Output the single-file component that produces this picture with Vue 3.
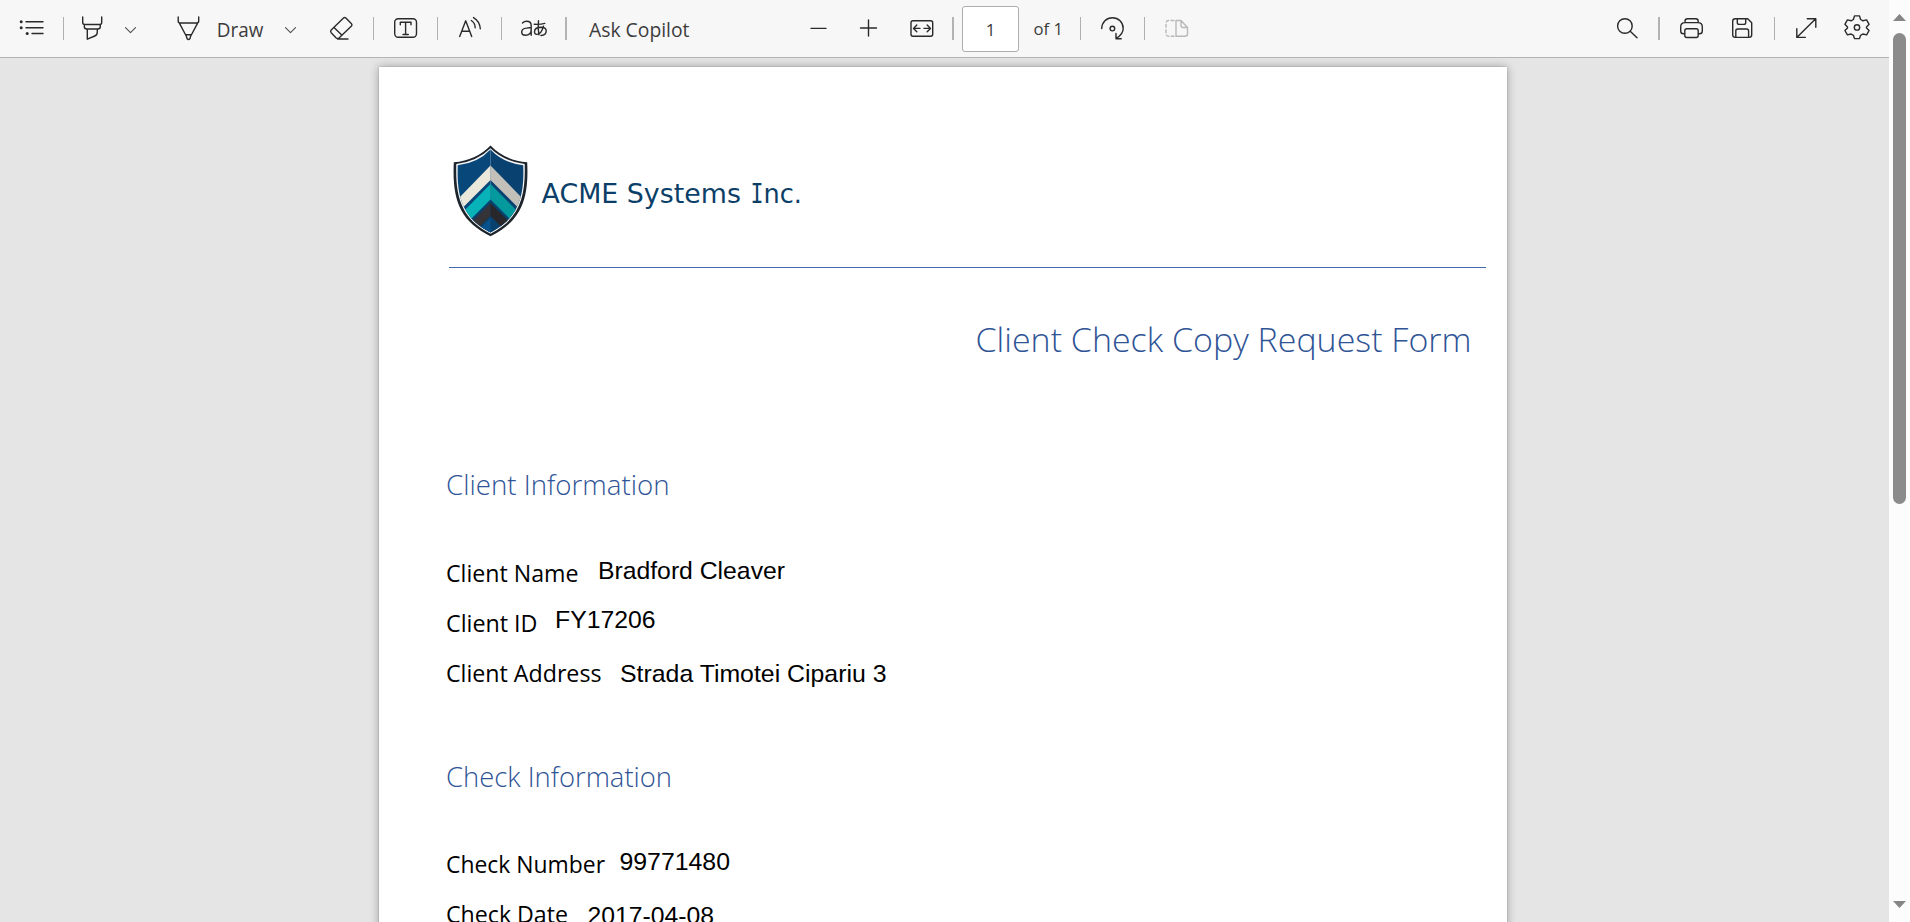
<script setup>
const clientFields = [
  { top: 557, label: 'Client Name', labelY: 582, labelLen: 132.5, value: 'Bradford Cleaver', x: 598, y: 579, len: 187 },
  { top: 607, label: 'Client ID', labelY: 632, labelLen: 91.5, value: 'FY17206', x: 555, y: 628, len: 100.5 },
  { top: 657, label: 'Client Address', labelY: 682, labelLen: 155.5, value: 'Strada Timotei Cipariu 3', x: 620, y: 682, len: 266.5 },
]
const checkFields = [
  { top: 848, label: 'Check Number', labelY: 873, labelLen: 159, value: '99771480', x: 619.5, y: 870, len: 110.5 },
  { top: 898, label: 'Check Date', labelY: 923, labelLen: 122, value: '2017-04-08', x: 587.5, y: 924, len: 126.5 },
]
</script>

<template>
  <div class="viewer">
    <div class="main">
      <header class="toolbar">
        <svg class="contents" width="24" height="57" viewBox="19 0 24 57"><path d="M26 21.7h17M26 27.7h17M32 33.5h11" /><g class="solid"><circle cx="21.2" cy="21.7" r="1.5" /><circle cx="21.2" cy="27.7" r="1.5" /><circle cx="27.2" cy="33.5" r="1.5" /></g></svg>
        <i class="sep s1"></i>
        <svg class="highlight" width="24" height="57" viewBox="80 0 24 57"><path d="M82.7 17v5.5q0 2 2 2h15q2 0 2-2V17M84.3 24.5v2q0 2.5 2.5 2.5h11q2.500 0 2.500-2.500v-2M87.300 29v10.200l7.500-3.200q2.500-1 2.500-4v-3" /></svg>
        <svg class="chev c1" width="13" height="57" viewBox="124 0 13 57"><path d="M125.500 27.700l5 5 5-5" /></svg>
        <svg class="pen" width="24" height="57" viewBox="176 0 24 57"><path d="M178.200 17v4q0 2 2 2h16.500q2 0 2-2v-4M179.500 23.300l7 13.200q.3 3 2 3t2-3l7-13.200M185.800 34.800h5.200" /></svg>
        <svg class="draw" width="46" height="57" viewBox="217 0 46 57"><text class="ui" x="216.800" y="37" textLength="46.500" lengthAdjust="spacingAndGlyphs">Draw</text></svg>
        <svg class="chev c2" width="13" height="57" viewBox="284 0 13 57"><path d="M285.500 27.700l5 5 5-5" /></svg>
        <svg class="eraser" width="24" height="57" viewBox="329 0 24 57"><path d="M331.200 30l12.300-12q1.200-1 2.400 0l5.600 5.700q1 1.200 0 2.400L339 38q-1.400 1.200-2.800 0l-5-5.200q-1.200-1.400 0-2.800zM334 27.400l8 7.800M337.500 39h10.500" /></svg>
        <i class="sep s2"></i>
        <svg class="textbox" width="24" height="57" viewBox="394 0 24 57"><rect x="394.700" y="18.700" width="21.800" height="18.600" rx="3.500" /><path d="M400.300 24.800v-2.600h10.700v2.600M405.600 22.200v12.300M403 34.500h5.300" /></svg>
        <i class="sep s3"></i>
        <svg class="read" width="24" height="57" viewBox="458 0 24 57"><path d="M459.700 36.500l6-15.700 6 15.700M461.800 31.300h7.900M471.300 20.500q3.800 2.200 3.900 7.300M473.500 17.600q6.300 3.700 6.800 11.200" /></svg>
        <i class="sep s4"></i>
        <svg class="translate" width="28" height="57" viewBox="520 0 28 57"><path d="M522.500 23q1.500-1.700 4.300-1.700 4.400 0 4.400 4.200v9.700M531.200 27.500l-4.700.6q-4.800.5-4.800 3.900 0 3.200 3.600 3.200 5.900 0 5.900-5.700M534.300 24.200q5.500.5 10.500-.8M538.500 20.800q-1 8 .5 14M543.500 26.200q-2 7.800-6.500 8.200-2.500.1-2.500-2.600 0-4.600 6.700-4.600 5 .2 5 3.700 0 4-5.200 4.600" /></svg>
        <i class="sep thick s5"></i>
        <svg class="copilot" width="102" height="57" viewBox="588 0 102 57"><text class="ui" x="589" y="37" textLength="100.500" lengthAdjust="spacingAndGlyphs">Ask Copilot</text></svg>
        <svg class="minus" width="24" height="57" viewBox="807 0 24 57"><path d="M811 28.400h15" /></svg>
        <svg class="plus" width="24" height="57" viewBox="856 0 24 57"><path d="M860.500 28h16M868.500 20v16" /></svg>
        <svg class="fit" width="26" height="57" viewBox="910 0 26 57"><rect x="911" y="20.700" width="21.700" height="15.600" rx="2" /><path d="M920 28.400h-6.500M916.800 25.100l-3.300 3.300 3.300 3.300M924 28.400h6.500M927.200 25.100l3.300 3.300-3.300 3.300" /></svg>
        <i class="sep thick s6"></i>
        <div class="page-number">1</div>
        <svg class="total" width="31" height="57" viewBox="1033 0 31 57"><text class="ui small" x="1033.500" y="35.200" textLength="29.500" lengthAdjust="spacingAndGlyphs">of 1</text></svg>
        <i class="sep s7"></i>
        <svg class="rotate" width="26" height="57" viewBox="1100 0 26 57"><path d="M1101.700 28.500c.2-6.500 4.800-10.800 10.700-10.800 6 0 10.800 4.800 10.800 10.600 0 4.200-2.600 7.500-6.800 9.900M1116 33.500v5.200h5.200" /><circle cx="1112.400" cy="28.600" r="2.300" /></svg>
        <i class="sep s8"></i>
        <svg class="pages" width="26" height="57" viewBox="1164 0 26 57"><path d="M1176 20.500v15.800h9q2.500 0 2.500-2.500v-6.300l-6.500-7zM1181 20.500v5q0 2 2 2h4.500" /><path stroke-dasharray="3 2.300" d="M1174 20.500h-5q-3 0-3 3v9.800q0 3 3 3h5" /></svg>
        <svg class="search" width="24" height="57" viewBox="1615 0 24 57"><circle cx="1624.900" cy="26" r="7.300" /><path d="M1630.200 31.300l6.800 6.500" /></svg>
        <i class="sep thick s9"></i>
        <svg class="print" width="24" height="57" viewBox="1680 0 24 57"><path d="M1684.500 33.700h-1q-2.800 0-2.800-2.800v-4q0-4.300 4.300-4.300h13q4.300 0 4.300 4.300v4q0 2.800-2.800 2.800h-1M1685 22.300v-1q0-2.600 2.600-2.600h8q2.600 0 2.600 2.600v1" /><rect x="1684.800" y="28.700" width="13.400" height="8.800" rx="2" /></svg>
        <svg class="save" width="24" height="57" viewBox="1731 0 24 57"><path d="M1735.200 18.700h12.500l4 4v12.100q0 2.600-2.600 2.600h-13.800q-2.600 0-2.600-2.600V21.200q0-2.500 2.500-2.500zM1737.300 18.700v3.800q0 1.900 1.900 1.900h4.600q1.900 0 1.900-1.900v-3.800M1735.800 37.300V31q0-2 2-2h8.800q2 0 2 2v6.300" /></svg>
        <i class="sep s10"></i>
        <svg class="expand" width="24" height="57" viewBox="1794 0 24 57"><path d="M1797 37.300l18.700-18.500M1807.300 18.700h8.500v8.500M1796.800 28.800v8.600h8.500" /></svg>
        <svg class="gear" width="25" height="57" viewBox="1845 0 25 57"><path d="M1854.500 15.900h5l1.100 3.600 2.300 1.300 3.700-.9 2.500 4.400-2.600 2.600v1l2.600 2.600-2.500 4.400-3.700-.9-2.300 1.300-1.100 3.300h-5l-1.100-3.300-2.300-1.300-3.700.9-2.500-4.400 2.600-2.600v-1l-2.600-2.600 2.500-4.400 3.700.9 2.300-1.300z" /><circle cx="1857" cy="27.400" r="2.700" /></svg>
      </header>

      <main class="canvas">
        <article class="sheet">
          <svg class="brand" width="400" height="100" viewBox="446 140 400 100">
            <defs>
              <clipPath id="shield-clip"><path d="M490.500 149.500Q478 163 457.800 165.300C456.500 196 462 218 490.500 232.500C519 218 524.500 196 523.200 165.300Q503 163 490.500 149.500Z" /></clipPath>
            </defs>
            <path class="shield-edge" d="M490.500 145.500Q476 160.500 453.800 162.300C452 200 460 221 490.500 236.300C521 221 529 200 527.200 162.300Q505 160.500 490.500 145.500Z" />
            <path class="shield-line" d="M490.500 148.300Q477 161.500 456.300 164C455.200 197 461.500 219 490.500 233.700C519.500 219 525.800 197 524.700 164Q504 161.500 490.500 148.300Z" />
            <g clip-path="url(#shield-clip)">
              <path fill="#07477a" d="M450 140h40.500v100H450z" />
              <path fill="#094270" d="M490.500 140H531v100h-40.500z" />
              <path fill="#e9e8db" d="M490.500 165.500L454 203v13.500l36.500-36.500z" />
              <path fill="#c2c0b9" d="M490.500 165.500L527 203v13.500L490.500 180z" />
              <path fill="#08b3b7" d="M490.500 184L458 217v17l32.500-33.500z" />
              <path fill="#049a9d" d="M490.500 184L523 217v17l-32.500-33.500z" />
              <path fill="#08416e" d="M490.500 199.500L462 228v15h57v-15z" />
              <path fill="#343337" d="M490.500 203L466 227.500v13l24.500-24.500z" />
              <path fill="#28272c" d="M490.500 203L515 227.500v13L490.500 216z" />
              <path fill="#07528b" d="M490.500 218L470 238h20.500z" />
            </g>
            <text class="company" y="203"><tspan x="541.500" textLength="208" lengthAdjust="spacingAndGlyphs">ACME Systems </tspan><tspan class="serif-i" x="750.500" textLength="13" lengthAdjust="spacingAndGlyphs">I</tspan><tspan x="763.500" textLength="38.500" lengthAdjust="spacingAndGlyphs">nc.</tspan></text>
          </svg>
          <div class="rule"></div>
          <svg class="title" width="520" height="60" viewBox="960 320 520 60"><text class="light big" x="975.500" y="351.500" textLength="496" lengthAdjust="spacingAndGlyphs">Client Check Copy Request Form</text></svg>
          <svg class="section first" width="300" height="45" viewBox="446 465 300 45"><text class="light" x="446" y="495" textLength="223.500" lengthAdjust="spacingAndGlyphs">Client Information</text></svg>
          <svg v-for="f in clientFields" :key="f.label" class="field" width="500" height="50" :viewBox="`446 ${f.top} 500 50`">
            <text class="label" x="446" :y="f.labelY" :textLength="f.labelLen" lengthAdjust="spacingAndGlyphs">{{ f.label }}</text>
            <text class="value" :x="f.x" :y="f.y" :textLength="f.len" lengthAdjust="spacingAndGlyphs">{{ f.value }}</text>
          </svg>
          <svg class="section second" width="300" height="45" viewBox="446 757 300 45"><text class="light" x="446" y="787" textLength="226" lengthAdjust="spacingAndGlyphs">Check Information</text></svg>
          <svg v-for="f in checkFields" :key="f.label" class="field" width="500" height="50" :viewBox="`446 ${f.top} 500 50`">
            <text class="label" x="446" :y="f.labelY" :textLength="f.labelLen" lengthAdjust="spacingAndGlyphs">{{ f.label }}</text>
            <text class="value" :x="f.x" :y="f.y" :textLength="f.len" lengthAdjust="spacingAndGlyphs">{{ f.value }}</text>
          </svg>
        </article>
      </main>
    </div>
    <aside class="scrollbar">
      <i class="arrow up"></i>
      <i class="thumb"></i>
      <i class="arrow down"></i>
    </aside>
  </div>
</template>

<style>
html, body { margin: 0; overflow: hidden; background: #e5e5e5; }
</style>

<style scoped>
.viewer { display: flex; width: 1910px; height: 922px; overflow: hidden; background: #e5e5e5; }
.main { width: 1889px; display: flex; flex-direction: column; }
svg { display: block; flex: none; overflow: visible; }

.toolbar { display: flex; align-items: center; height: 57px; flex: none; background: #f7f7f7; border-bottom: 1px solid #b4b4b4; }
.toolbar svg { fill: none; stroke: #2a2a2a; stroke-width: 1.4; stroke-linecap: round; stroke-linejoin: round; }
.toolbar .solid { fill: #2a2a2a; stroke: none; }
.toolbar .ui { font: 400 19.6px "Open Sans", "Noto Sans", sans-serif; fill: #3c3c3c; stroke: none; }
.toolbar .ui.small { font-size: 17px; }
.sep { width: 1px; height: 23px; flex: none; background: #b0b0b0; }
.sep.thick { width: 2px; background: #b3b3b3; }
.contents { margin-left: 19px; }
.s1 { margin-left: 20px; }
.highlight { margin-left: 16px; }
.c1 { margin-left: 20px; }
.toolbar .chev { stroke: #555; stroke-width: 1.2; }
.pen { margin-left: 39px; }
.draw { margin-left: 17px; }
.c2 { margin-left: 21px; }
.eraser { margin-left: 32px; }
.s2 { margin-left: 20px; }
.textbox { margin-left: 20px; }
.s3 { margin-left: 19px; }
.read { margin-left: 20px; }
.s4 { margin-left: 19px; }
.translate { margin-left: 18px; }
.s5 { margin-left: 17px; }
.copilot { margin-left: 21px; }
.minus { margin-left: 117px; }
.plus { margin-left: 25px; }
.fit { margin-left: 30px; }
.s6 { margin-left: 16px; }
.page-number { box-sizing: border-box; width: 57px; height: 46px; margin-left: 8px; flex: none; border: 1px solid #adadad; border-radius: 3px; background: #fff; font: 400 17px/46px "Open Sans", "Noto Sans", sans-serif; color: #3c3c3c; text-align: center; }
.total { margin-left: 14px; }
.s7 { margin-left: 16px; }
.rotate { margin-left: 19px; }
.s8 { margin-left: 18px; }
.pages { margin-left: 19px; }
.toolbar .pages { stroke: #b9b9b9; }
.search { margin-left: 425px; }
.s9 { margin-left: 19px; }
.print { margin-left: 20px; }
.save { margin-left: 27px; }
.s10 { margin-left: 19px; }
.expand { margin-left: 19px; }
.gear { margin-left: 27px; }

.canvas { flex: 1; overflow: hidden; padding: 9px 0 0 379px; }
.sheet { box-sizing: border-box; width: 1128px; height: 1460px; padding: 73px 0 0 67px; background: #fff; box-shadow: 0 0 1px rgba(0, 0, 0, .35), 0 0 9px rgba(0, 0, 0, .32); }
.shield-edge { fill: #1d242c; }
.shield-line { fill: #f2f4f5; }
.company { font: 400 27px "DejaVu Sans", sans-serif; fill: #0c3f68; }
.serif-i { font-family: "DejaVu Sans Mono", monospace; }
.rule { width: 1037px; height: 1px; margin: 27px 0 0 3px; background: #4468ad; }
.title { margin: 52px 0 0 514px; }
.light { font: 330 26.6px "Open Sans", sans-serif; fill: #2f5496; }
.light.big { font-size: 33.4px; }
.section.first { margin: 85px 0 47px; }
.section.second { margin: 50px 0 46px; }
.label { font: 430 23px "Open Sans", sans-serif; fill: #000; }
.value { font: 400 24.8px "Liberation Sans", Arial, sans-serif; fill: #000; }

.scrollbar { width: 21px; display: flex; flex-direction: column; align-items: center; background: #fcfcfc; }
.arrow { width: 13px; height: 7px; background: #868686; }
.up { margin-top: 14px; clip-path: polygon(50% 0, 100% 100%, 0 100%); }
.down { margin-top: 397px; clip-path: polygon(0 0, 100% 0, 50% 100%); }
.thumb { width: 13px; height: 471px; margin-top: 12px; border-radius: 7px; background: #8b8b8b; }
</style>
